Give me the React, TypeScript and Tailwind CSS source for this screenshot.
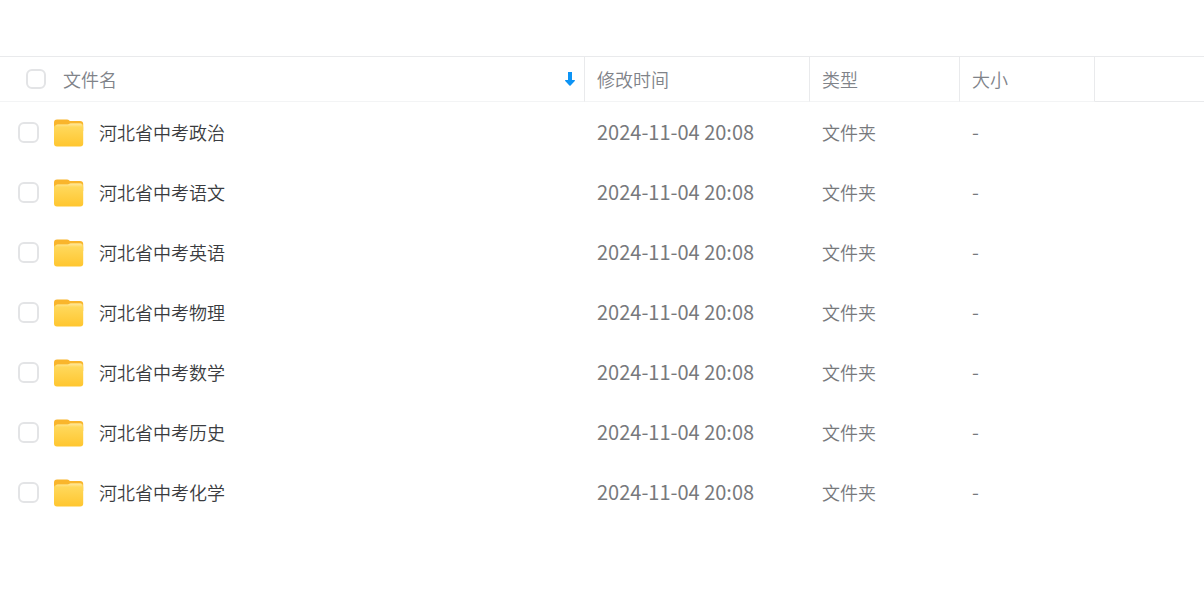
import { useState } from "react";

type Arquivo = {
  id: number;
  nome: string;
  modificado: string;
  tipo: string;
  tamanho: string;
};

const ARQUIVOS: Arquivo[] = [
  "河北省中考政治",
  "河北省中考语文",
  "河北省中考英语",
  "河北省中考物理",
  "河北省中考数学",
  "河北省中考历史",
  "河北省中考化学",
].map((nome, i) => ({
  id: i + 1,
  nome,
  modificado: "2024-11-04 20:08",
  tipo: "文件夹",
  tamanho: "-",
}));

export default function App() {
  const [marcados, setMarcados] = useState<number[]>([]);
  const todos = marcados.length === ARQUIVOS.length;

  function alternar(id: number) {
    setMarcados((m) => (m.includes(id) ? m.filter((x) => x !== id) : [...m, id]));
  }

  return (
    <main className="min-h-screen bg-white pt-14 font-['Noto_Sans_CJK_SC',sans-serif] text-lg font-[350] text-[#77797c]">
      <table className="w-full table-fixed border-separate border-spacing-0 text-left">
        <colgroup>
          <col />
          <col className="w-[225px]" />
          <col className="w-[150px]" />
          <col className="w-[135px]" />
          <col className="w-[109px]" />
        </colgroup>
        <thead>
          <tr className="h-[46px] text-[#808389]">
            <th className="border-y border-r border-t-[#e9eaec] border-r-[#e9eaec] border-b-[#f3f4f5] p-0 font-[350]">
              <div className="flex items-center pr-2 pl-[26px]">
                <Caixa
                  label="全选"
                  pequena
                  checked={todos}
                  onChange={() => setMarcados(todos ? [] : ARQUIVOS.map((a) => a.id))}
                />
                <button className="ml-[17px] flex flex-1 items-center justify-between">
                  文件名
                  <SetaOrdem />
                </button>
              </div>
            </th>
            <Coluna>修改时间</Coluna>
            <Coluna>类型</Coluna>
            <Coluna>大小</Coluna>
            <td className="border-y border-[#e9eaec] p-0" />
          </tr>
        </thead>
        <tbody>
          {ARQUIVOS.map((a) => (
            <tr key={a.id} className="h-[60px]">
              <td className="p-0">
                <div className="flex items-center pl-[18px]">
                  <Caixa
                    label={a.nome}
                    checked={marcados.includes(a.id)}
                    onChange={() => alternar(a.id)}
                  />
                  <Pasta />
                  <a href="#" className="ml-[15px] text-[#3a3c40]">
                    {a.nome}
                  </a>
                </div>
              </td>
              <td className="p-0 pl-3 text-xl font-normal">{a.modificado}</td>
              <td className="p-0 pl-3">{a.tipo}</td>
              <td className="p-0 pl-3 text-xl">{a.tamanho}</td>
              <td className="p-0" />
            </tr>
          ))}
        </tbody>
      </table>
    </main>
  );
}

function Coluna({ children }: { children: string }) {
  return (
    <th className="border-y border-r border-t-[#e9eaec] border-r-[#e9eaec] border-b-[#f3f4f5] p-0 pl-3 font-[350]">
      {children}
    </th>
  );
}

function Caixa({
  label,
  pequena,
  checked,
  onChange,
}: {
  label: string;
  pequena?: boolean;
  checked: boolean;
  onChange: () => void;
}) {
  return (
    <input
      type="checkbox"
      aria-label={label}
      checked={checked}
      onChange={onChange}
      className={`shrink-0 appearance-none rounded-md border-2 border-[#e3e4e6] bg-white checked:border-[#06a7ff] checked:bg-[#06a7ff] ${
        pequena ? "size-5" : "size-[21px]"
      }`}
    />
  );
}

function SetaOrdem() {
  return (
    <svg viewBox="0 0 12 16" className="h-4 w-3" fill="#0d94f5" aria-hidden="true">
      <path d="M4 1h4v8h2.400q1 .2.400 1L6.600 14.600q-.6.500-1.200 0L1.200 10q-.6-.8.400-1H4z" />
    </svg>
  );
}

function Pasta() {
  return (
    <svg viewBox="0 -2 30 30" className="ml-[15px] size-[30px] shrink-0" aria-hidden="true">
      <defs>
        <linearGradient id="frente" x1="0" y1="0" x2="0" y2="1">
          <stop offset="0" stopColor="#ffdb62" />
          <stop offset="1" stopColor="#ffc62f" />
        </linearGradient>
        <linearGradient id="brilho" x1="0" y1="0" x2="0" y2="1">
          <stop offset="0" stopColor="#ffe79a" />
          <stop offset="1" stopColor="#ffe79a" stopOpacity="0" />
        </linearGradient>
      </defs>
      <path
        d="M0 3.500Q0 .5 3 .5h10q1.500 0 2.300.9l.6.600H26q3.200 0 3.200 3V12H0z"
        fill="#f9b52b"
      />
      <path
        d="M0 8.500Q0 6.500 1.500 6.300L3 5.500h9.500q1.500 0 2.500-.5l1-.4h11.200q2 .4 2 3.400v16.500q0 3-3 3H3q-3 0-3-3z"
        fill="url(#frente)"
      />
      <path d="M2 6.500q.5-1 2-1h8.500q1.500 0 2.500-.5t2-.4h9q1.500 0 2 1.400v2H2z" fill="url(#brilho)" />
    </svg>
  );
}
